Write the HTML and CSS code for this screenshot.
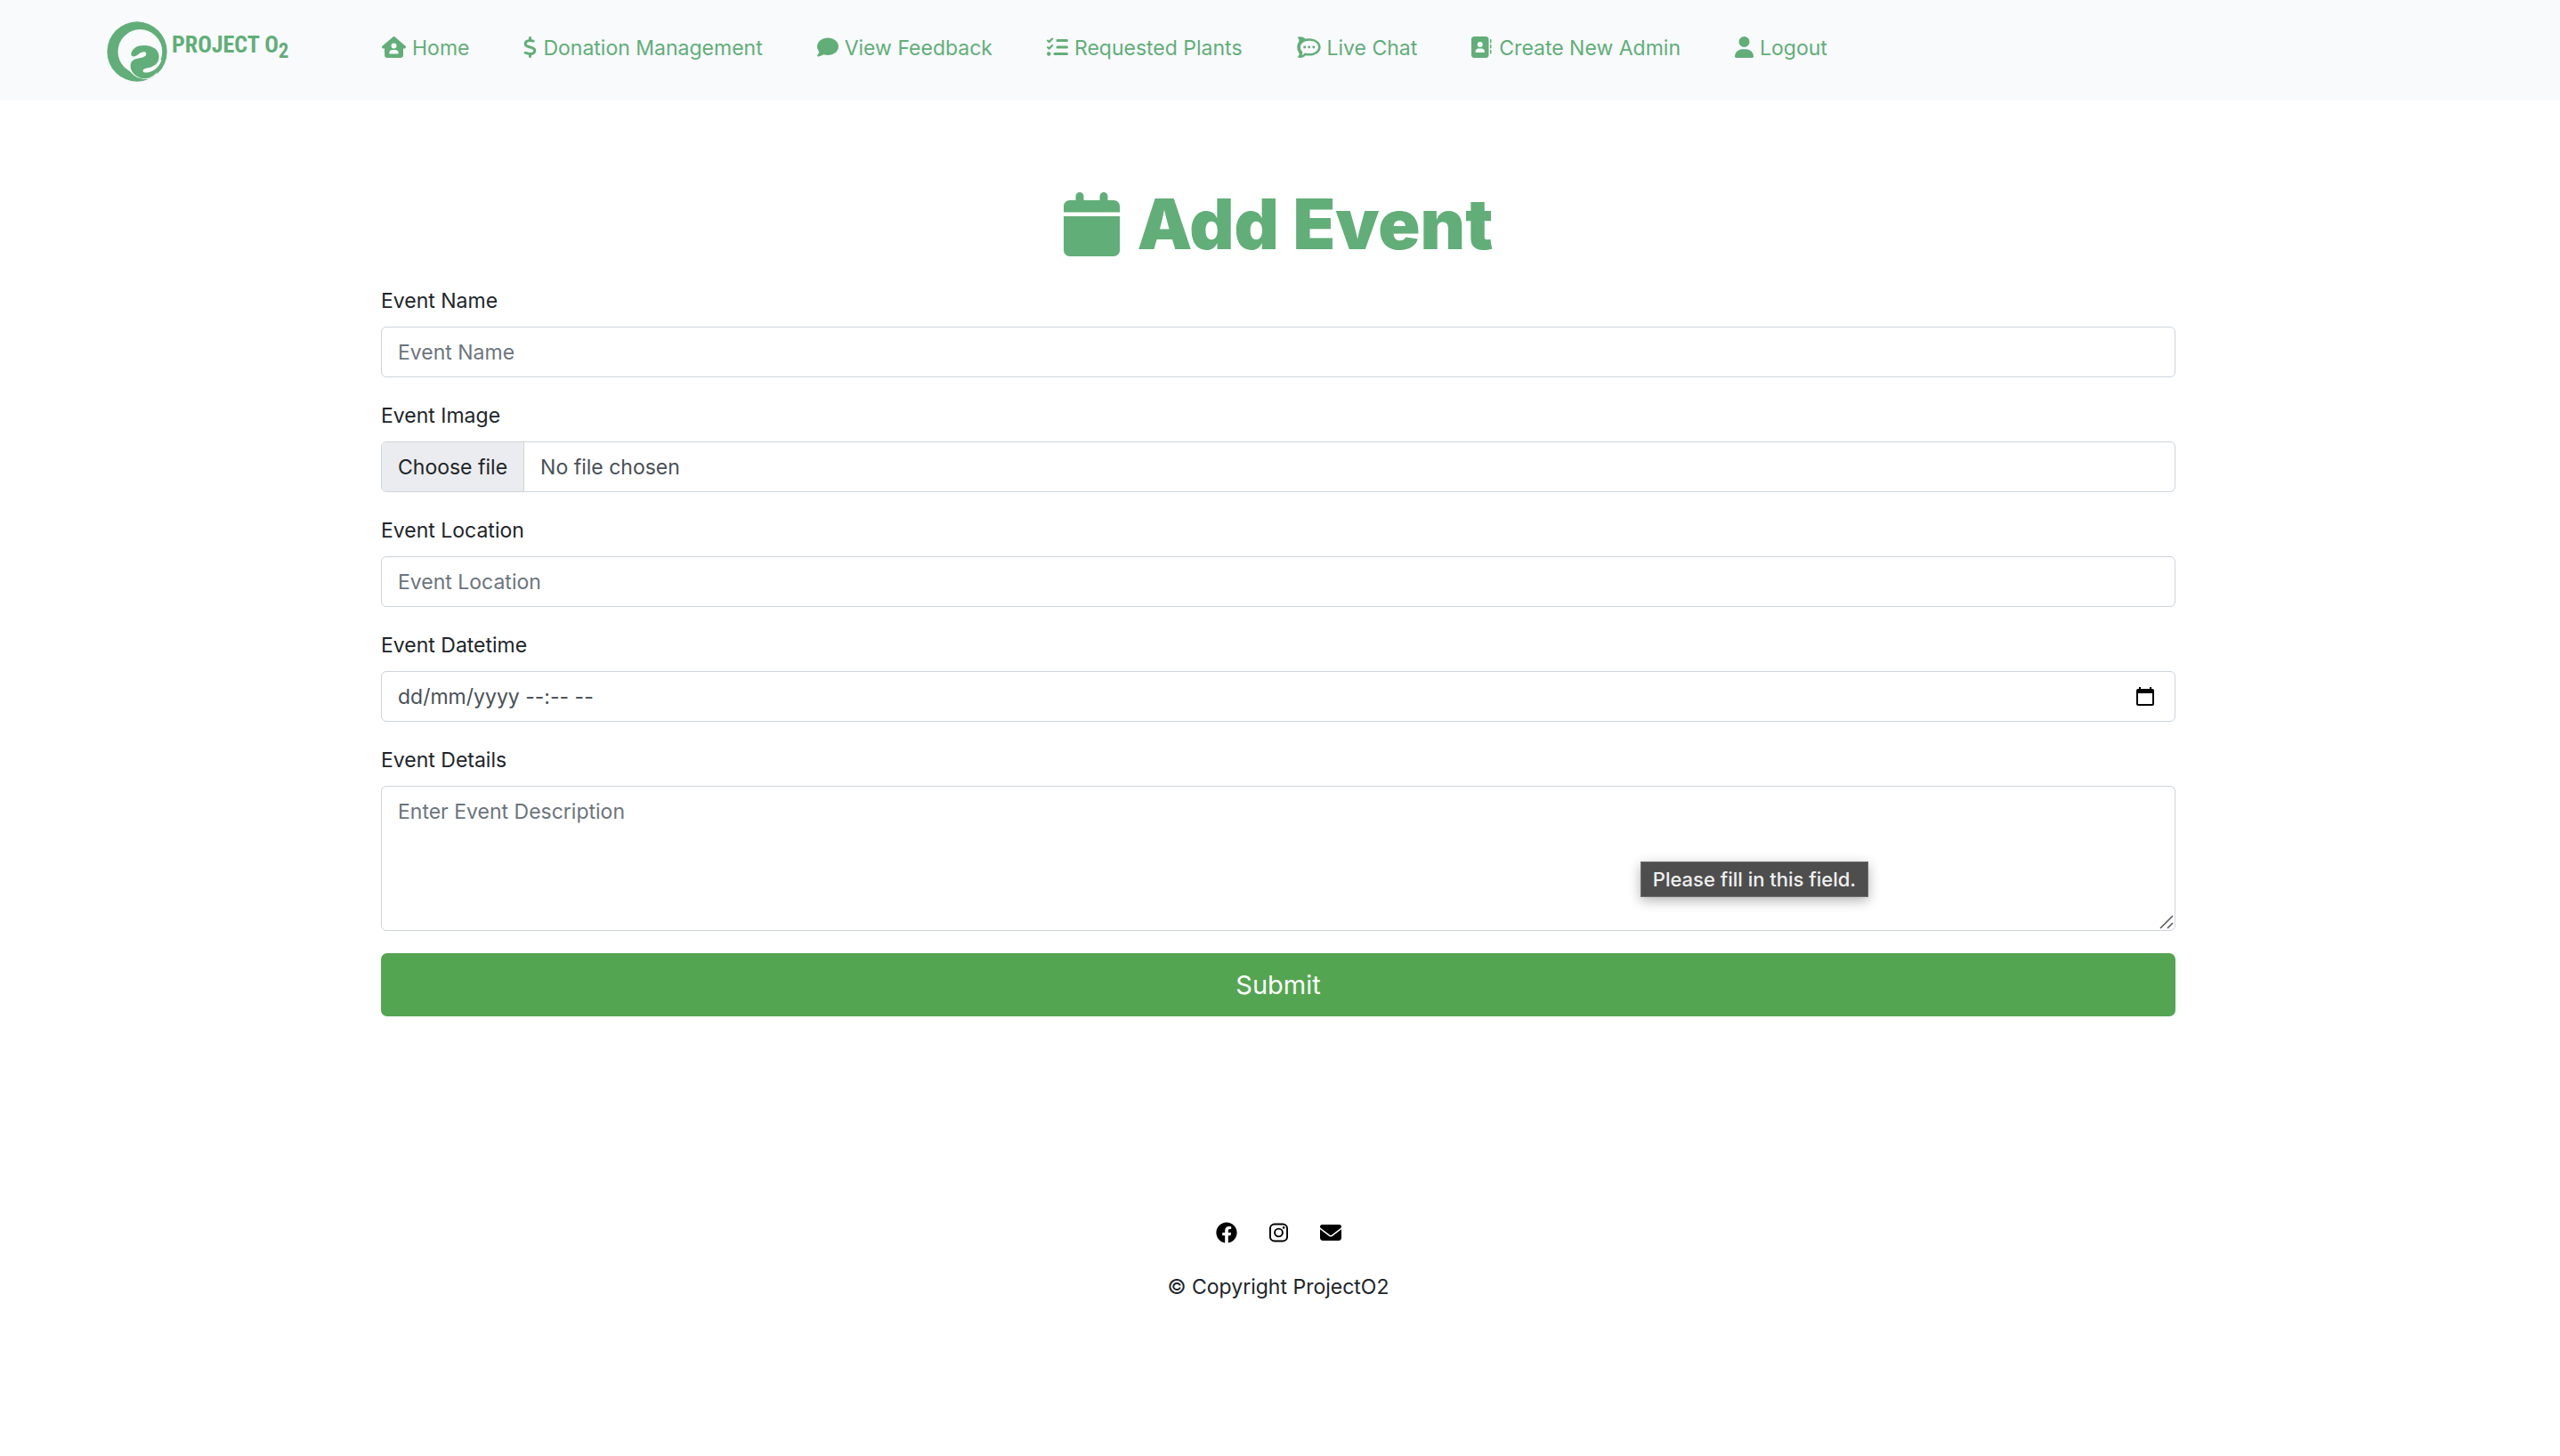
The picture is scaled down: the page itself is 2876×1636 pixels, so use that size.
FILE: index.html
```html
<!DOCTYPE html>
<html lang="en">
<head>
<meta charset="utf-8">
<title>Add Event - Project O2</title>
<link rel="stylesheet" href="styles.css">
</head>
<body>
<header class="navbar">
  <a class="brand" href="#">
    <svg class="brand-mark" viewBox="63 71 202 202" aria-hidden="true">
      <circle cx="164" cy="172" r="100" fill="currentColor"/>
      <circle cx="174" cy="172" r="74" class="paper"/>
      <path class="paper" d="M137 232C150 254 172 266 203 264L228 250L246 200L140 190Z"/>
      <path fill="currentColor" d="M144 182C146 160 165 151 187 151C215 151 237 165 237 188C237 210 222 222 200 226C188 228 182 232 184 238C186 244 200 243 212 238C228 231 240 218 246 200C246 235 215 264 185 262C160 258 142 240 142 220C142 200 158 196 175 193C190 190 196 184 194 177C192 170 180 172 172 178C160 190 146 192 144 182Z"/>
    </svg>
    <span class="brand-name">PROJECT O<sub>2</sub></span>
  </a>
  <nav class="nav">
    <a href="#"><svg class="icon w27" viewBox="0 0 576 512"><path fill-rule="evenodd" d="M575.8 255.5c0 18-15 32.1-32 32.1h-32l.7 160.2c.2 35.5-28.5 64.3-64 64.3H128c-35.3 0-64-28.7-64-64V287.6H32c-18 0-32-14-32-32.1c0-9 3-17 10-24L266.400 8c7-7 15-8 22-8s15 2 21 7L564.800 231.500c8 7 12 15 11 24zM352 224a64 64 0 1 0-128 0a64 64 0 1 0 128 0zM256 320c-44.200 0-80 35.800-80 80c0 8.800 7.200 16 16 16H384c8.800 0 16-7.200 16-16c0-44.200-35.800-80-80-80H256z"/></svg>Home</a>
    <a href="#"><svg class="icon w15" viewBox="0 0 320 512"><path d="M160 0c17.700 0 32 14.300 32 32V67.700c1.600 .2 3.100 .4 4.700 .7c.4 .1 .7 .1 1.100 .2l48 8.800c17.400 3.200 28.900 19.900 25.700 37.200s-19.900 28.900-37.200 25.700l-47.500-8.700c-31.300-4.600-58.900-1.500-78.300 6.200s-27.200 18.300-29 28.100c-2 10.700-.5 16.700 1.200 20.400c1.800 3.900 5.500 8.300 12.800 13.200c16.300 10.700 41.300 17.700 73.700 26.300l2.900 .8c28.600 7.600 63.600 16.800 89.600 33.800c14.200 9.300 27.600 21.900 35.900 39.500c8.500 17.900 10.300 37.900 6.400 59.200c-6.900 38-33.100 63.400-65.600 76.700c-13.700 5.600-28.600 9.200-44.400 11V480c0 17.700-14.300 32-32 32s-32-14.300-32-32V445.100c-.4-.1-.9-.1-1.300-.2l-.2 0c-24.400-3.800-64.500-14.300-91.500-26.300c-16.100-7.200-23.400-26.100-16.200-42.200s26.100-23.400 42.200-16.200c20.900 9.300 55.300 18.500 75.200 21.600c31.900 4.700 58.200 2 76-5.300c16.900-6.900 24.600-16.900 26.800-28.900c1.900-10.600 .4-16.700-1.300-20.400c-1.900-4-5.600-8.400-13-13.300c-16.400-10.700-41.500-17.700-74-26.300l-2.800-.7C119.400 279.300 84.400 270 58.400 253c-14.200-9.300-27.500-22-35.800-39.600c-8.400-17.900-10.100-37.900-6.100-59.200C23.700 116 52.300 91.200 84.800 78.300c13.300-5.300 27.900-8.900 43.200-11V32c0-17.700 14.300-32 32-32z"/></svg>Donation Management</a>
    <a href="#"><svg class="icon w24" viewBox="0 0 512 512"><path d="M512 240c0 114.900-114.600 208-256 208c-37.100 0-72.300-6.400-104.100-17.900c-11.900 8.700-31.300 20.600-54.300 30.600C73.600 471.100 44.700 480 16 480c-6.500 0-12.300-3.900-14.800-9.900c-2.500-6-1.100-12.800 3.400-17.400l.3-.3c.3-.3 .7-.7 1.300-1.400c1.100-1.200 2.800-3.100 4.900-5.700c4.100-5 9.600-12.400 15.200-21.600c10-16.600 19.500-38.400 21.400-62.900C17.700 326.800 0 285.100 0 240C0 125.100 114.600 32 256 32s256 93.100 256 208z"/></svg>View Feedback</a>
    <a href="#"><svg class="icon w24" viewBox="0 0 512 512"><g fill="none" stroke="currentColor" stroke-linecap="round" stroke-linejoin="round"><path stroke-width="46" d="M24 98L60 130L132 54M24 258L60 290L132 214"/><path stroke-width="64" d="M256 96H480M256 256H480M192 416H480"/></g><circle cx="48" cy="416" r="48"/></svg>Requested Plants</a>
    <a href="#"><svg class="icon w27" viewBox="0 0 576 512"><path d="M8 14C90-12 170 10 206 58C390 22 568 108 568 256S390 488 206 452C160 505 90 525 8 498C60 455 62 420 48 388C-8 310-8 205 48 124C62 92 50 50 8 14Z"/><path class="paper" d="M300 100C178 100 84 160 84 254C84 300 104 338 132 364C136 392 130 420 112 446C148 442 172 422 190 396C370 436 512 362 512 254C512 160 420 100 300 100Z"/><circle cx="184" cy="256" r="31"/><circle cx="292" cy="256" r="31"/><circle cx="400" cy="256" r="31"/></svg>Live Chat</a>
    <a href="#"><svg class="icon w24" viewBox="0 0 512 512"><path fill-rule="evenodd" d="M64 0H352c35 0 64 29 64 64V448c0 35-29 64-64 64H64c-35 0-64-29-64-64V64C0 29 29 0 64 0zM272 192a64 64 0 1 0-128 0a64 64 0 1 0 128 0zM176 288c-44 0-80 36-80 80c0 9 7 16 16 16H304c9 0 16-7 16-16c0-44-36-80-80-80H176z"/><path d="M448 64h16c9 0 16 7 16 16v64c0 9-7 16-16 16h-16zM448 192h16c9 0 16 7 16 16v64c0 9-7 16-16 16h-16zM448 320h16c9 0 16 7 16 16v64c0 9-7 16-16 16h-16z"/></svg>Create New Admin</a>
    <a href="#"><svg class="icon w21" viewBox="0 0 448 512"><path d="M224 256A128 128 0 1 0 224 0a128 128 0 1 0 0 256zm-45.700 48C79.800 304 0 383.800 0 482.300C0 498.700 13.300 512 29.700 512H418.300c16.400 0 29.700-13.300 29.700-29.700C448 383.800 368.200 304 269.700 304H178.300z"/></svg>Logout</a>
  </nav>
</header>

<main class="content">
  <h1 class="title">
    <svg class="title-icon" viewBox="0 0 448 512" aria-hidden="true"><path d="M96 32V64H48C21.500 64 0 85.500 0 112v48H448V112c0-26.500-21.500-48-48-48H352V32c0-17.700-14.300-32-32-32s-32 14.300-32 32V64H160V32c0-17.700-14.300-32-32-32S96 14.300 96 32zM448 192H0V464c0 26.500 21.500 48 48 48H400c26.500 0 48-21.500 48-48V192z"/></svg>
    Add Event
  </h1>
  <form class="form">
    <div class="field">
      <label for="name">Event Name</label>
      <input class="control" id="name" type="text" placeholder="Event Name">
    </div>
    <div class="field">
      <label for="image">Event Image</label>
      <div class="control file">
        <label class="file-button" for="image">Choose file</label>
        <span class="file-name">No file chosen</span>
        <input class="file-input" id="image" type="file">
      </div>
    </div>
    <div class="field">
      <label for="location">Event Location</label>
      <input class="control" id="location" type="text" placeholder="Event Location">
    </div>
    <div class="field">
      <label for="datetime">Event Datetime</label>
      <div class="control date">
        <input class="date-input" id="datetime" type="text" value="dd/mm/yyyy --:-- --">
        <button class="date-button" type="button" aria-label="Open calendar"><svg viewBox="0 0 20 22"><path fill-rule="evenodd" d="M3 0h2v2h10V0h2v2h1a2 2 0 0 1 2 2v15a2 2 0 0 1-2 2H2a2 2 0 0 1-2-2V4a2 2 0 0 1 2-2h1zM2 7v12h16V7z"/></svg></button>
      </div>
    </div>
    <div class="field">
      <label for="details">Event Details</label>
      <textarea class="control area" id="details" placeholder="Enter Event Description"></textarea>
      <svg class="grip" viewBox="0 0 16 16" aria-hidden="true"><path d="M1 15L15 1M9 15L15 9" fill="none" stroke="#555" stroke-width="1.500"/></svg>
      <span class="tooltip" role="tooltip">Please fill in this field.</span>
    </div>
    <button class="submit" type="submit">Submit</button>
  </form>
</main>

<footer class="footer">
  <div class="social">
    <a href="#" aria-label="Facebook"><svg class="icon w24" viewBox="0 0 512 512"><path d="M504 256C504 119 393 8 256 8S8 119 8 256c0 123.780 90.690 226.380 209.250 245V327.690h-63V256h63v-54.640c0-62.150 37-96.480 93.670-96.480 27.140 0 55.520 4.840 55.520 4.840v61h-31.280c-30.800 0-40.410 19.120-40.410 38.730V256h68.780l-11 71.690h-57.780V501C413.310 482.380 504 379.780 504 256z"/></svg></a>
    <a href="#" aria-label="Instagram"><svg class="icon w21" viewBox="0 0 448 512"><g fill="none" stroke="currentColor" stroke-width="41"><rect x="20" y="52" width="408" height="408" rx="106"/><circle cx="224" cy="256" r="94"/></g><circle cx="344" cy="136" r="27"/></svg></a>
    <a href="#" aria-label="Email"><svg class="icon w24" viewBox="0 0 512 512"><path d="M48 64C21.500 64 0 85.500 0 112c0 15.100 7.100 29.300 19.200 38.400L236.800 313.600c11.400 8.500 27 8.500 38.400 0L492.800 150.400c12.100-9.100 19.200-23.300 19.200-38.400c0-26.500-21.500-48-48-48H48zM0 176V384c0 35.300 28.700 64 64 64H448c35.300 0 64-28.700 64-64V176L294.400 339.200c-22.800 17.100-54 17.100-76.800 0L0 176z"/></svg></a>
  </div>
  <p class="copyright">© Copyright ProjectO2</p>
</footer>
</body>
</html>
```
FILE: styles.css
```css
* { box-sizing: border-box; }

body {
  margin: 0;
  background: #fff;
  color: #212529;
  font-family: Inter, "Liberation Sans", sans-serif;
  font-size: 23px;
  line-height: 36px;
}

a { color: inherit; text-decoration: none; }

.icon { height: 24px; fill: currentColor; flex: none; }
.w15 { width: 15px; }
.w21 { width: 21px; }
.w24 { width: 24px; }
.w27 { width: 27px; }

.navbar {
  display: flex;
  align-items: flex-start;
  height: 112px;
  padding: 24px 120px 0;
  background: #f8fafc;
  color: #62ae78;
}
.paper { fill: #f8fafc; }

.brand { display: flex; width: 309px; }
.brand-mark { width: 68px; height: 68px; flex: none; }
.brand-name {
  padding: 8px 0 0 5px;
  font: bold 26px/36px "Roboto Condensed", "Open Sans Condensed", "DejaVu Sans Condensed", sans-serif;
  white-space: nowrap;
}
.brand-name sub { font-size: 23px; line-height: 0; }

.nav { display: flex; gap: 61px; padding-top: 12px; }
.nav a { display: flex; align-items: center; gap: 7px; white-space: nowrap; }
.nav .icon { margin-top: -2px; }

.content { padding: 104px 432px 0 428px; }

.title {
  display: flex;
  justify-content: center;
  align-items: center;
  gap: 20px;
  height: 72px;
  margin: 0 0 32px;
  color: #62ae78;
  font-size: 78px;
  font-weight: 900;
  line-height: 72px;
}
.title-icon { width: 63px; height: 72px; fill: currentColor; }

.form { display: flex; flex-direction: column; gap: 25px; }
.field { position: relative; display: flex; flex-direction: column; gap: 11px; }

.control {
  width: 100%;
  height: 57px;
  padding: 0 18px;
  border: 1px solid #ced4da;
  border-radius: 6px;
  background: #fff;
  color: #495057;
  font: inherit;
}
.control::placeholder { color: #6c757d; opacity: 1; }

.file { position: relative; display: flex; align-items: center; padding: 0; overflow: hidden; }
.file-button {
  display: flex;
  align-items: center;
  height: 100%;
  padding: 0 18px;
  border-right: 1px solid #ced4da;
  background: #ebecef;
  color: #212529;
}
.file-name { padding-left: 18px; }
.file-input { position: absolute; inset: 0; width: 100%; opacity: 0; }

.date { display: flex; align-items: center; }
.date-input { flex: 1; padding: 0; border: 0; background: none; color: inherit; font: inherit; }
.date-button { width: 20px; height: 22px; margin-right: 5px; padding: 0; border: 0; background: none; color: #000; }
.date-button svg { display: block; width: 20px; height: 22px; }

.area { display: block; height: 163px; padding-top: 10px; resize: vertical; }
.area::-webkit-resizer { background: transparent; }
.grip {
  position: absolute;
  right: 2px;
  bottom: 2px;
  width: 16px;
  height: 16px;
  pointer-events: none;
}

.tooltip {
  position: absolute;
  right: 345px;
  bottom: 38px;
  padding: 0 13px;
  border: 1px solid #6b6b6b;
  background: #4e4e4e;
  color: #f0f0f0;
  font-size: 22px;
  font-weight: 500;
  line-height: 38px;
  box-shadow: 0 4px 14px rgba(0, 0, 0, .3);
}

.submit {
  height: 71px;
  padding: 0;
  border: 0;
  border-radius: 7px;
  background: #54a551;
  color: #fff;
  font: inherit;
  font-size: 29px;
}

.footer {
  display: flex;
  flex-direction: column;
  align-items: center;
  gap: 31px;
  padding: 231px 4px 48px 0;
}
.social { display: flex; gap: 36px; color: #000; }
.social a { display: flex; }
.copyright { margin: 0; }
```
